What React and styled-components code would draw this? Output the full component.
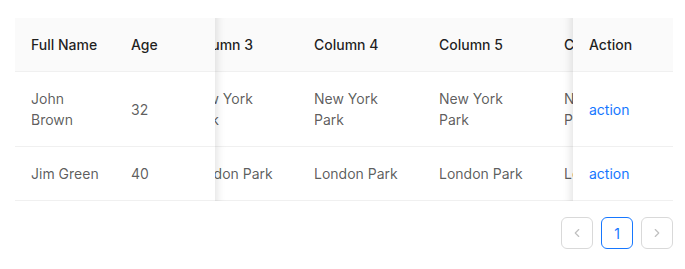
import React, { useLayoutEffect, useRef } from 'react';
import styled, { createGlobalStyle, css } from 'styled-components';
import { LuChevronLeft, LuChevronRight } from 'react-icons/lu';

const GlobalStyle = createGlobalStyle`
    body {
        margin: 0;
        background: #fff;
        font-family: Inter, "Noto Sans", sans-serif;
        font-size: 14px;
        color: rgba(0, 0, 0, 0.88);
    }
`;

const Page = styled.div`
    padding: 18px 12px 0 15px;
`;

const ScrollArea = styled.div`
    overflow-x: auto;
    scrollbar-width: none;
    &::-webkit-scrollbar {
        display: none;
    }
`;

const Table = styled.table`
    width: 1300px;
    table-layout: fixed;
    border-collapse: separate;
    border-spacing: 0;
`;

const stickyStyles = css`
    position: sticky;
    z-index: 2;
    ${(p) => p.$left !== undefined && `left: ${p.$left}px;`}
    ${(p) => p.$right !== undefined && `right: ${p.$right}px;`}

    ${(p) => p.$shadow === 'left' && `
        &::after {
            content: '';
            position: absolute;
            top: 0;
            bottom: -1px;
            right: 0;
            width: 30px;
            transform: translateX(100%);
            pointer-events: none;
            box-shadow: inset 10px 0 8px -8px rgba(5, 5, 5, 0.12);
        }
    `}
    ${(p) => p.$shadow === 'right' && `
        &::after {
            content: '';
            position: absolute;
            top: 0;
            bottom: -1px;
            left: 0;
            width: 30px;
            transform: translateX(-100%);
            pointer-events: none;
            box-shadow: inset -10px 0 8px -8px rgba(5, 5, 5, 0.12);
        }
    `}
`;

const Th = styled.th`
    padding: 16px;
    text-align: left;
    font-weight: 500;
    line-height: 21px;
    color: rgba(0, 0, 0, 0.88);
    background: #fafafa;
    border-bottom: 1px solid #f0f0f0;
    white-space: nowrap;
    overflow: hidden;
    ${(p) => p.$sticky && stickyStyles}
    ${(p) => p.$sticky && `overflow: visible;`}
`;

const Td = styled.td`
    padding: 16px;
    line-height: 21px;
    vertical-align: middle;
    color: rgba(0, 0, 0, 0.65);
    background: #fff;
    border-bottom: 1px solid #f0f0f0;
    overflow-wrap: break-word;
    ${(p) => p.$sticky && stickyStyles}
`;

const ActionLink = styled.a`
    color: #1677ff;
    text-decoration: none;
    cursor: pointer;
`;

const Pager = styled.ul`
    display: flex;
    justify-content: flex-end;
    gap: 8px;
    list-style: none;
    margin: 16px 0 0;
    padding: 0;
`;

const PagerItem = styled.li`
    width: 32px;
    height: 32px;
    box-sizing: border-box;
    display: flex;
    align-items: center;
    justify-content: center;
    border: 1px solid ${(p) => (p.$active ? '#1677ff' : '#d9d9d9')};
    border-radius: 6px;
    color: ${(p) => (p.$active ? '#1677ff' : 'rgba(0, 0, 0, 0.25)')};
    font-size: 14px;
    background: #fff;
    cursor: ${(p) => (p.$active ? 'pointer' : 'not-allowed')};
`;

const middleColumns = ['Column 1', 'Column 2', 'Column 3', 'Column 4', 'Column 5', 'Column 6', 'Column 7', 'Column 8'];

const data = [
    { key: 1, name: 'John Brown', age: 32, address: 'New York Park' },
    { key: 2, name: 'Jim Green', age: 40, address: 'London Park' },
];

export default function App() {
    const scrollRef = useRef(null);

    useLayoutEffect(() => {
        if (scrollRef.current) scrollRef.current.scrollLeft = 292;
    }, []);

    return (
        <Page>
            <GlobalStyle />
            <ScrollArea ref={scrollRef}>
                <Table>
                    <colgroup>
                        <col style={{ width: 100 }} />
                        <col style={{ width: 100 }} />
                        {middleColumns.map((c) => (
                            <col key={c} style={{ width: 125 }} />
                        ))}
                        <col style={{ width: 100 }} />
                    </colgroup>
                    <thead>
                        <tr>
                            <Th $sticky $left={0}>Full Name</Th>
                            <Th $sticky $left={100} $shadow="left">Age</Th>
                            {middleColumns.map((c) => (
                                <Th key={c}>{c}</Th>
                            ))}
                            <Th $sticky $right={0} $shadow="right">Action</Th>
                        </tr>
                    </thead>
                    <tbody>
                        {data.map((row) => (
                            <tr key={row.key}>
                                <Td $sticky $left={0}>{row.name}</Td>
                                <Td $sticky $left={100} $shadow="left">{row.age}</Td>
                                {middleColumns.map((c) => (
                                    <Td key={c}>{row.address}</Td>
                                ))}
                                <Td $sticky $right={0} $shadow="right">
                                    <ActionLink>action</ActionLink>
                                </Td>
                            </tr>
                        ))}
                    </tbody>
                </Table>
            </ScrollArea>
            <Pager>
                <PagerItem><LuChevronLeft size={14} /></PagerItem>
                <PagerItem $active>1</PagerItem>
                <PagerItem><LuChevronRight size={14} /></PagerItem>
            </Pager>
        </Page>
    );
}
